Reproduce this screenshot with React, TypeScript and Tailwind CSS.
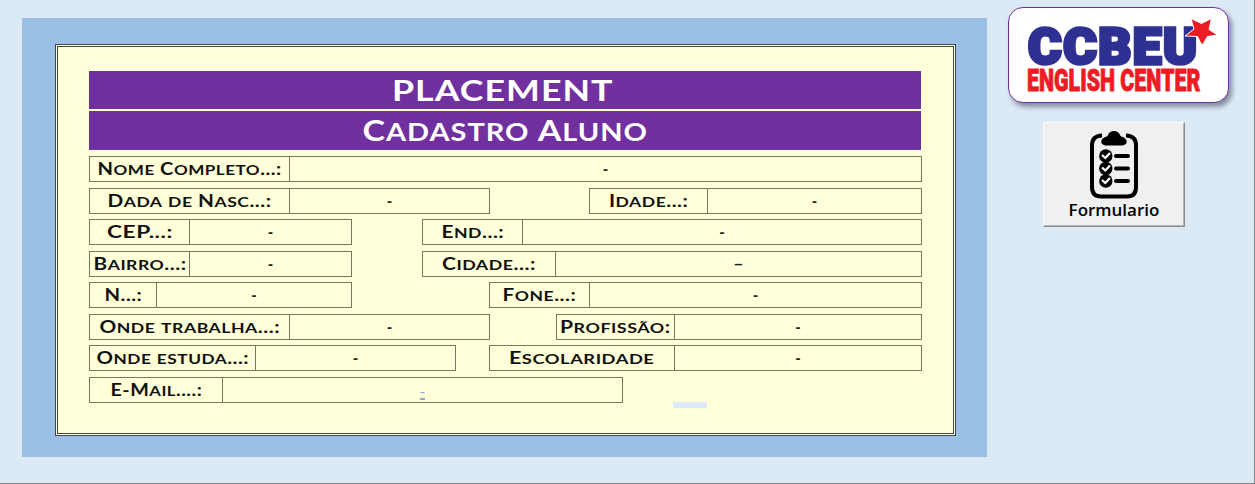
import { useLayoutEffect, useRef, useState } from "react";
import type { ReactNode } from "react";

/* Inline text stretched horizontally to a given width. */
function Stretch({ children, width, className }: { children: ReactNode; width: number; className: string }) {
  const ref = useRef<HTMLSpanElement>(null);
  const [scale, setScale] = useState(1);
  useLayoutEffect(() => {
    if (ref.current) setScale(width / ref.current.offsetWidth);
  }, [width]);
  return (
    <span
      ref={ref}
      className={`inline-block shrink-0 whitespace-pre ${className}`}
      style={{ transform: `scaleX(${scale})` }}
    >
      {children}
    </span>
  );
}

/* Small capitals: lower-case runs are set as smaller capitals. */
function Caps({ text, width, className }: { text: string; width: number; className: string }) {
  const runs = text.match(/[a-zã]+|[^a-zã]+/g) ?? [];
  return (
    <Stretch width={width} className={`font-['Lato',sans-serif] ${className}`}>
      {runs.map((run, i) =>
        /[a-zã]/.test(run) ? (
          <span key={i} className="text-[0.85em] uppercase">{run}</span>
        ) : (
          run
        ),
      )}
    </Stretch>
  );
}

type FieldProps = {
  label: string;
  width: number;
  labelBox: string;
  valueBox: string;
  value?: string;
  link?: boolean;
};

function Field({ label, width, labelBox, valueBox, value = "-", link = false }: FieldProps) {
  return (
    <div className="flex h-[26px] border border-[#77775f]">
      <div className={`flex items-center justify-center border-r border-[#77775f] ${labelBox}`}>
        <Caps text={label} width={width} className="text-[16.5px] leading-[24px] font-bold tracking-[0.4px] text-[#111]" />
      </div>
      <div
        className={`flex items-center justify-center font-['Liberation_Sans',sans-serif] text-[15px] leading-[24px] ${valueBox} ${
          link ? "pt-[4px] text-[#8fa9cf] underline decoration-2" : "font-bold text-[#222]"
        }`}
      >
        {value}
      </div>
    </div>
  );
}

function Logo() {
  return (
    <div className="relative flex h-[96px] w-[221px] flex-col items-start rounded-[15px] border-[1.5px] border-[#7030a0] bg-white pt-[20px] pl-[18px] shadow-[3px_4px_5px_rgba(70,80,95,0.6)]">
      <div className="flex h-[38px] w-[173px] justify-center">
        <Stretch
          width={171}
          className="font-['Roboto',sans-serif] text-[50px] leading-[38px] font-black tracking-[1.5px] text-[#2e3192] [-webkit-text-stroke:3.5px_#2e3192]"
        >
          CCBEU
        </Stretch>
      </div>
      <div className="mt-[4px] flex h-[22px] w-[173px] justify-center">
        <Stretch
          width={173}
          className="font-['Roboto',sans-serif] text-[31px] leading-[22px] font-black text-[#ed1c24] [-webkit-text-stroke:0.9px_#ed1c24]"
        >
          ENGLISH CENTER
        </Stretch>
      </div>
      <svg viewBox="1184 17 34 30" className="absolute top-[9px] left-[175px] h-[30px] w-[34px]">
        <path
          d="M1191 18.5 L1201.5 23.5 L1211.5 18.5 L1209 29.5 L1217.5 35 L1207.5 36.5 L1202 45.5 L1197.5 36.5 L1185 36 L1194 29 Z"
          fill="#ed1c24" stroke="#fff" strokeWidth="1"
        />
      </svg>
    </div>
  );
}

function FormButton() {
  return (
    <button className="flex h-[105px] w-[142px] flex-col items-center border border-t-[#fafafa] border-r-[#8c8c8c] border-b-[#8c8c8c] border-l-[#fafafa] bg-[#f0f0f0] pt-[7px] shadow-[inset_-1px_-1px_0_#b4b4b4]">
      <svg viewBox="0 0 50 70" className="h-[70px] w-[50px]" fill="none" stroke="#000" strokeLinecap="round">
        <path d="M13 5.5Q3 6 3 15V57Q3 66.500 12 66.500H38Q47 66.500 47 57V15Q47 6 37 5.5" strokeWidth="4" strokeLinecap="butt" />
        <path
          d="M18 15.5C12 15.5 11 11.500 13.500 9C15 6.500 18 7.500 19 5C20.500 -0.500 29.500 -0.500 31 5C32 7.500 35 6.500 36.500 9C39 11.500 38 15.500 32 15.500Z"
          fill="#000" stroke="none"
        />
        {[26, 38.5, 51].map((y) => (
          <g key={y}>
            <circle cx="16.800" cy={y} r="6.700" fill="#000" stroke="none" />
            <path d={`M13 ${y - 1}L16.300 ${y + 2}L21 ${y - 3}`} stroke="#fff" strokeWidth="2.300" strokeLinecap="butt" />
            <path d={`M27 ${y}H39`} strokeWidth="4" />
          </g>
        ))}
      </svg>
      <span className="font-['Open_Sans',sans-serif] text-[17px] leading-[20px] font-semibold text-black">
        Formulario
      </span>
    </button>
  );
}

export default function App() {
  return (
    <div className="flex h-[484px] w-[1255px] items-start overflow-hidden border-r border-b border-[#858585] bg-[#dceaf6] pt-[7px] pl-[22px]">
      <main className="mt-[11px] h-[439px] w-[965px] bg-[#9bc0e6] pt-[26px] pl-[33px]">
        <section className="h-[392px] w-[901px] border-3 border-double border-[#3c4a50] bg-[#ffffd9] pt-[24px] pl-[31px]">
          <div className="flex w-[832px] flex-col">
            <h1 className="flex h-[38px] items-center justify-center bg-[#7030a0] pr-[5px]">
              <Caps text="PLACEMENT" width={221} className="text-[28px] leading-[40px] font-bold tracking-[0.8px] text-white" />
            </h1>
            <h2 className="mt-[2px] flex h-[39px] items-center justify-center bg-[#7030a0]">
              <Caps text="Cadastro Aluno" width={285} className="text-[28px] leading-[40px] font-bold tracking-[0.8px] text-white" />
            </h2>
            <div className="mt-[6px] flex w-[833px] justify-between">
              <Field label="Nome Completo...:" width={184} labelBox="w-[200px]" valueBox="w-[631px]" />
            </div>
            <div className="mt-[6px] flex w-[833px] justify-between">
              <Field label="Dada de Nasc...:" width={164} labelBox="w-[200px]" valueBox="w-[199px]" />
              <Field label="Idade...:" width={79} labelBox="w-[118px]" valueBox="w-[213px]" />
            </div>
            <div className="mt-[5px] flex w-[833px] justify-between">
              <Field label="CEP...:" width={66} labelBox="w-[100px]" valueBox="w-[161px]" />
              <Field label="End...:" width={63} labelBox="w-[100px]" valueBox="w-[398px]" />
            </div>
            <div className="mt-[6px] flex w-[833px] justify-between">
              <Field label="Bairro...:" width={93} labelBox="w-[100px]" valueBox="w-[161px]" />
              <Field label="Cidade...:" width={94} labelBox="w-[133px]" valueBox="w-[365px]" value="–" />
            </div>
            <div className="mt-[5px] flex w-[833px] justify-between">
              <Field label="N...:" width={38} labelBox="w-[67px]" valueBox="w-[194px]" />
              <Field label="Fone...:" width={74} labelBox="w-[100px]" valueBox="w-[331px]" />
            </div>
            <div className="mt-[6px] flex w-[833px] justify-between">
              <Field label="Onde trabalha...:" width={180} labelBox="w-[200px]" valueBox="w-[199px]" />
              <Field label="Profissão:" width={111} labelBox="w-[118px]" valueBox="w-[246px]" />
            </div>
            <div className="mt-[5px] flex w-[833px] justify-between">
              <Field label="Onde estuda...:" width={153} labelBox="w-[166px]" valueBox="w-[199px]" />
              <Field label="Escolaridade" width={145} labelBox="w-[185px]" valueBox="w-[246px]" />
            </div>
            <div className="mt-[6px] flex w-[833px]">
              <Field label="E-Mail....:" width={92} labelBox="w-[133px]" valueBox="w-[399px]" link />
              <div className="mt-[25px] ml-[50px] h-[6px] w-[34px] bg-[#dce9f7]" />
            </div>
          </div>
        </section>
      </main>
      <aside className="ml-[21px] flex flex-col items-start">
        <Logo />
        <div className="mt-[19px] ml-[35px]">
          <FormButton />
        </div>
      </aside>
    </div>
  );
}
